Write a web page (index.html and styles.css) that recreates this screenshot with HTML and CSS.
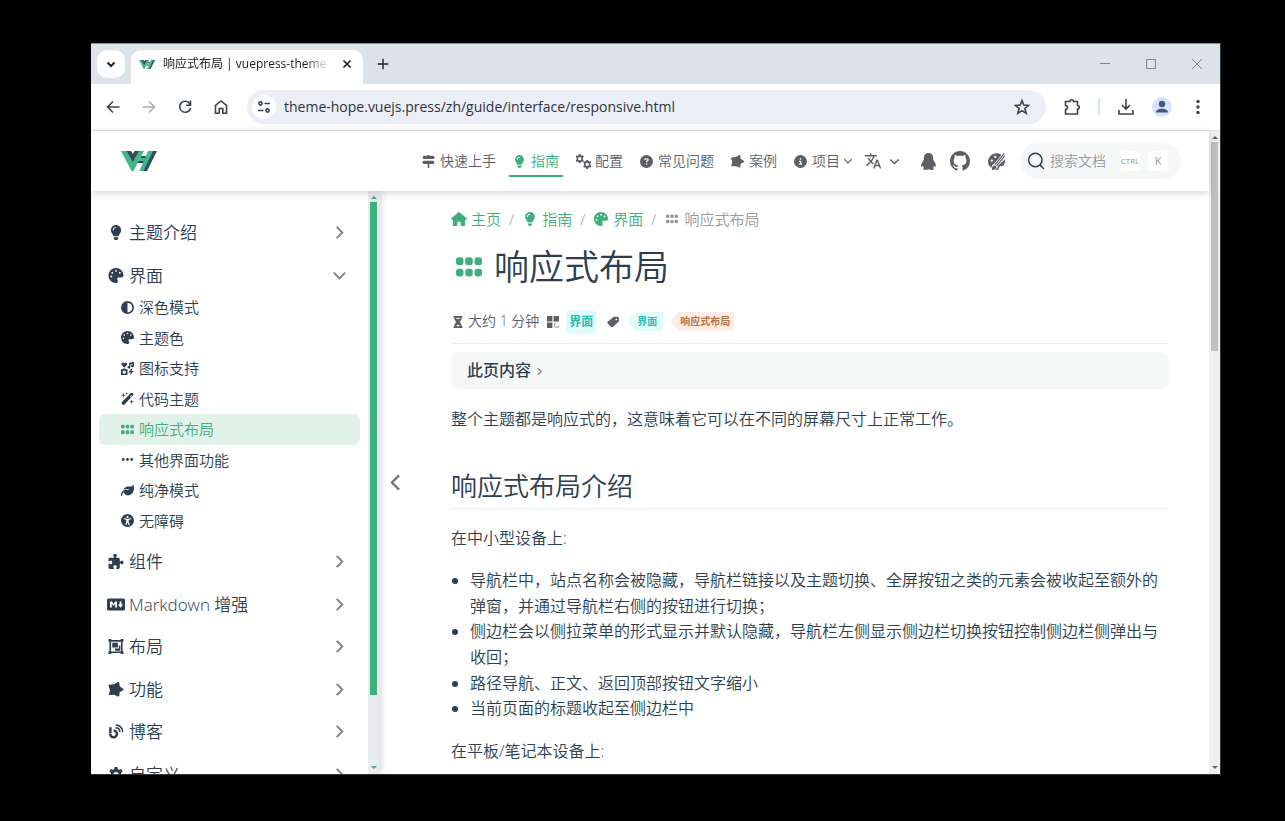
FILE: index.html
```html
<!DOCTYPE html>
<html lang="zh-CN">
<head>
    <meta charset="UTF-8">
    <meta name="viewport" content="width=device-width, initial-scale=1.0">
    <title>响应式布局 | vuepress-theme-hope</title>
    <link rel="stylesheet" href="styles.css">
</head>
<body>
    <!-- icon sprite -->
    <svg class="sprite" aria-hidden="true">
        <symbol id="logo" viewBox="0 0 36 20">
            <path fill="#41b883" d="M0 0h6l5.500 10L16 0h7L12.500 20h-2z"/>
            <path fill="#35495e" d="M5.500 0h4.500l1.800 3 1.800-3H18l-6.300 11z"/>
            <path fill="#35495e" d="M20.500 5H28l-1 2h-7.500zM17.500 10h8l-1 2h-8z"/>
            <path fill="#41b883" d="M19.500 7H28l-2 3h-8.500z"/>
            <path fill="#41b883" d="M27 0h5.500L23.500 20h-5z"/>
            <path fill="#35495e" d="M32 0h4L26 20h-3.500z"/>
        </symbol>
        <symbol id="chevron" viewBox="0 0 16 16"><path fill="none" stroke="currentColor" stroke-width="2" d="M5 2l6 6-6 6"/></symbol>
        <symbol id="bulb" viewBox="-64 0 512 512"><path d="M272 384c9.600-31.900 29.500-59.100 49.200-86.200c5.200-7.100 10.400-14.200 15.400-21.400c19.800-28.500 31.400-63 31.400-100.300C368 78.800 289.200 0 192 0S16 78.800 16 176c0 37.300 11.600 71.900 31.400 100.300c5 7.200 10.200 14.300 15.400 21.400c19.800 27.100 39.700 54.400 49.200 86.200H272zM192 512c44.200 0 80-35.800 80-80V416H112v16c0 44.200 35.800 80 80 80zM112 176c0 8.800-7.200 16-16 16s-16-7.200-16-16c0-61.900 50.100-112 112-112c8.800 0 16 7.200 16 16s-7.200 16-16 16c-44.200 0-80 35.800-80 80z"/></symbol>
        <symbol id="palette" viewBox="0 0 512 512"><path d="M512 256c0 .9 0 1.800 0 2.700c-.4 36.500-33.600 61.300-70.100 61.300H344c-26.500 0-48 21.500-48 48c0 3.400 .4 6.700 1 9.900c2.100 10.200 6.500 20 10.800 29.900c6.100 13.800 12.100 27.500 12.100 42c0 31.800-21.600 60.700-53.400 62c-3.500 .1-7 .2-10.600 .2C114.600 512 0 397.400 0 256S114.600 0 256 0S512 114.600 512 256zM128 288a32 32 0 1 0-64 0 32 32 0 1 0 64 0zm0-96a32 32 0 1 0 0-64 32 32 0 1 0 0 64zM288 96a32 32 0 1 0-64 0 32 32 0 1 0 64 0zm96 96a32 32 0 1 0 0-64 32 32 0 1 0 0 64z"/></symbol>
        <symbol id="half" viewBox="0 0 512 512"><path d="M448 256c0-106-86-192-192-192V448c106 0 192-86 192-192zM0 256a256 256 0 1 1 512 0A256 256 0 1 1 0 256z"/></symbol>
        <symbol id="icons" viewBox="0 0 16 16"><path d="M4 7L1 4C-.5 2 2-.5 4 1.500 6-.5 8.500 2 7 4zM10 1l6-1v5a1.800 1.500 0 1 1-1.500-1.500V2.500l-3 .5v3.500A1.800 1.500 0 1 1 10 5zM2 9l1-1h2l1 1h2v7H0V9zM4 10.500a2 2 0 1 0 0 4 2 2 0 0 0 0-4zM13 8l-4 5h3l-1 3 5-5h-3l1-3z"/></symbol>
        <symbol id="wand" viewBox="0 0 16 16"><path d="M12 1.500a2 2 0 0 1 2.700 0 2 2 0 0 1 0 2.700L4.500 15a2 2 0 0 1-3 0 2 2 0 0 1 0-3zM11 5.500l1 1 1.500-2-.5-.5zM3 1l.7 2.300L6 4l-2.300.7L3 7l-.7-2.300L0 4l2.300-.7zM7 0l.5 1.500L9 2l-1.500.5L7 4l-.5-1.500L5 2l1.500-.5zM13 9l.7 2.300 2.300.7-2.300.7L13 15l-.7-2.300L10 12l2.300-.7z"/></symbol>
        <symbol id="grid" viewBox="0 0 16 16"><rect y="2" width="4.600" height="4.800" rx="1.800"/><rect x="5.700" y="2" width="4.600" height="4.800" rx="1.800"/><rect x="11.400" y="2" width="4.600" height="4.800" rx="1.800"/><rect y="9" width="4.600" height="4.800" rx="1.800"/><rect x="5.700" y="9" width="4.600" height="4.800" rx="1.800"/><rect x="11.400" y="9" width="4.600" height="4.800" rx="1.800"/></symbol>
        <symbol id="dots" viewBox="0 0 16 16"><circle cx="2.800" cy="8" r="1.700"/><circle cx="8" cy="8" r="1.700"/><circle cx="13.200" cy="8" r="1.700"/></symbol>
        <symbol id="leaf" viewBox="0 0 512 512"><path d="M272 96c-78.600 0-145.100 51.500-167.700 122.500c33.600-17 71.500-26.500 111.700-26.500h88c8.800 0 16 7.200 16 16s-7.200 16-16 16H216c-16.600 0-32.700 1.900-48.300 5.400c-25.900 5.900-49.900 16.400-71.400 30.700C38.300 298.800 0 364.900 0 440v16c0 13.300 10.700 24 24 24s24-10.700 24-24V440c0-48.700 20.700-92.500 53.800-123.200C121.600 392.300 190.300 448 272 448l1 0c132.100-.7 239-130.900 239-291.400c0-42.600-7.500-83.100-21.100-119.600c-2.600-6.900-12.700-6.600-16.200-.1C455.900 72.100 418.700 96 376 96z"/></symbol>
        <symbol id="access" viewBox="0 0 16 16"><path fill-rule="evenodd" d="M8 0a8 8 0 1 1 0 16A8 8 0 0 1 8 0zM8 2.500a1.400 1.400 0 1 0 0 2.800 1.400 1.400 0 0 0 0-2.800zM3.500 5v1.200l3 1.100v2.200l-1.200 3.800 1.200.4L8 10.200l1.500 3.500 1.200-.4-1.200-3.800V7.300l3-1.100V5L8.700 6H7.300z"/></symbol>
        <symbol id="puzzle" viewBox="0 0 512 512"><path d="M192 104.800c0-9.200-5.800-17.300-13.200-22.800C167.200 73.300 160 61.300 160 48c0-26.500 28.700-48 64-48s64 21.500 64 48c0 13.300-7.200 25.300-18.800 34c-7.400 5.500-13.200 13.600-13.200 22.800c0 12.800 10.400 23.200 23.200 23.200H336c26.500 0 48 21.500 48 48v56.800c0 12.800 10.400 23.200 23.200 23.200c9.200 0 17.300-5.800 22.800-13.200c8.700-11.600 20.700-18.800 34-18.800c26.500 0 48 28.700 48 64s-21.500 64-48 64c-13.300 0-25.300-7.200-34-18.800c-5.500-7.400-13.600-13.200-22.800-13.200c-12.800 0-23.200 10.400-23.200 23.200V464c0 26.500-21.500 48-48 48H279.200c-12.800 0-23.200-10.400-23.200-23.200c0-9.200 5.800-17.300 13.200-22.800c11.600-8.700 18.800-20.700 18.800-34c0-26.500-28.700-48-64-48s-64 21.500-64 48c0 13.300 7.200 25.300 18.800 34c7.400 5.500 13.200 13.600 13.200 22.800c0 12.800-10.400 23.200-23.200 23.200H48c-26.500 0-48-21.500-48-48V343.200C0 330.400 10.400 320 23.200 320c9.200 0 17.300 5.800 22.800 13.200C54.700 344.800 66.700 352 80 352c26.500 0 48-28.700 48-64s-21.500-64-48-64c-13.300 0-25.300 7.200-34 18.800C40.500 250.200 32.400 256 23.200 256C10.400 256 0 245.600 0 232.800V176c0-26.500 21.500-48 48-48H168.800c12.800 0 23.200-10.400 23.200-23.200z"/></symbol>
        <symbol id="markdown" viewBox="0 0 18 12"><path fill-rule="evenodd" d="M1.500 0h15A1.500 1.500 0 0 1 18 1.500v9a1.500 1.500 0 0 1-1.500 1.500h-15A1.500 1.500 0 0 1 0 10.500v-9A1.500 1.500 0 0 1 1.500 0zM3 3v6h1.800V5.500L6.500 7.500 8.200 5.500V9H10V3H8.200L6.500 5.200 4.800 3zM12.600 3v3h-1.800l2.700 3.200L16.200 6h-1.800V3z"/></symbol>
        <symbol id="layout" viewBox="0 0 16 16"><path fill-rule="evenodd" d="M0 0h3v1h10V0h3v3h-1v10h1v3h-3v-1H3v1H0v-3h1V3H0zM2.800 3v10h.2v.2h10V13h.2V3H13v-.2H3V3zM4 4h6v5H4zM11 7h1.500v5.500H7V10h4z"/></symbol>
        <symbol id="star" viewBox="0 0 16 16"><path stroke="currentColor" stroke-width="2" stroke-linejoin="round" d="M6 3.500L10.500 1l.5 4.200 4 2.800-4 2.300-.5 4.200L6 12.500l-4.500.5 1.200-4.700L1 4z"/></symbol>
        <symbol id="blog" viewBox="0 0 16 16"><path fill="none" stroke="currentColor" stroke-width="2.600" d="M2 3.500V10M5.500 7a3.600 3.600 0 1 1-3.700 3.600"/><path fill="none" stroke="currentColor" stroke-width="1.600" d="M7.500 1c4.500 0 7.500 3 7.500 7.500M7.500 4c3 0 4.500 1.700 4.500 4.500"/></symbol>
        <symbol id="gear" viewBox="0 0 16 16"><path fill-rule="evenodd" d="M6.500 0h3l.5 2.300 1.300.7 2.200-.8 1.500 2.600L13.400 6.500v3l1.600 1.700-1.500 2.600-2.200-.8-1.300.7-.5 2.300h-3L6 13.700 4.700 13l-2.200.8L1 11.200l1.600-1.700v-3L1 4.800l1.500-2.600 2.200.8L6 2.300zM8 5.200a2.800 2.800 0 1 0 0 5.600 2.800 2.800 0 0 0 0-5.600z"/></symbol>
        <symbol id="gears" viewBox="0 0 16 16"><use href="#gear" x="-1" y="0" width="10" height="10"/><use href="#gear" x="7" y="6" width="10" height="10"/></symbol>
        <symbol id="sign" viewBox="0 0 16 16"><path d="M7 0h2v1h5l2 2-2 2H2L1 4V2l1-1h5zM2 7h12l1 1v2l-1 1H9v5H7v-5H2L0 9z"/></symbol>
        <symbol id="question" viewBox="0 0 512 512"><path d="M256 512A256 256 0 1 0 256 0a256 256 0 1 0 0 512zM169.800 165.300c7.900-22.300 29.100-37.300 52.800-37.300h58.300c34.900 0 63.100 28.300 63.100 63.100c0 22.600-12.100 43.500-31.700 54.800L280 264.400c-.2 13-10.900 23.600-24 23.600c-13.300 0-24-10.700-24-24V250.500c0-8.600 4.600-16.500 12.100-20.800l44.300-25.400c4.700-2.700 7.600-7.700 7.600-13.100c0-8.400-6.800-15.100-15.100-15.100H222.600c-3.400 0-6.400 2.100-7.500 5.300l-.4 1.200c-4.400 12.500-18.200 19-30.600 14.600s-19-18.200-14.600-30.600zM224 352a32 32 0 1 1 64 0 32 32 0 1 1-64 0z"/></symbol>
        <symbol id="info" viewBox="0 0 512 512"><path d="M256 512A256 256 0 1 0 256 0a256 256 0 1 0 0 512zM216 336h24V272H216c-13.300 0-24-10.700-24-24s10.700-24 24-24h48c13.300 0 24 10.700 24 24v88h8c13.300 0 24 10.700 24 24s-10.700 24-24 24H216c-13.300 0-24-10.700-24-24s10.700-24 24-24zm40-208a32 32 0 1 1 0 64 32 32 0 1 1 0-64z"/></symbol>
        <symbol id="lang" viewBox="0 0 24 24"><path d="M12.870 15.070l-2.540-2.510.03-.03A17.520 17.520 0 0 0 14.070 6H17V4h-7V2H8v2H1v2h11.170C11.500 7.920 10.440 9.750 9 11.350 8.070 10.320 7.300 9.190 6.690 8h-2c.73 1.630 1.730 3.170 2.980 4.560l-5.090 5.020L4 19l5-5 3.110 3.110zM18.500 10h-2L12 22h2l1.120-3h4.750L21 22h2zm-2.620 7l1.620-4.330L19.120 17z"/></symbol>
        <symbol id="qq" viewBox="0 0 16 18"><path d="M8 0c3.500 0 5 2.500 5 5.500 0 1 0 1.800.5 2.500 1.500 2 2.500 4 2.300 6-.2 1.200-1 .8-1.800-.5-.2.800-.5 1.500-1.200 2.200 1.500.8 1 2.300-1.300 2.300-1.500 0-2.500-.2-3.500-.7-1 .5-2 .7-3.500.7-2.300 0-2.800-1.500-1.300-2.300-.7-.7-1-1.400-1.200-2.200-.8 1.300-1.600 1.700-1.800.5-.2-2 .8-4 2.300-6 .5-.7.500-1.500.5-2.500C3 2.500 4.500 0 8 0z"/></symbol>
        <symbol id="github" viewBox="0 0 16 16"><path d="M8 0C3.580 0 0 3.580 0 8c0 3.540 2.290 6.530 5.470 7.590.4.070.55-.17.55-.38 0-.19-.01-.82-.01-1.490-2.010.37-2.530-.49-2.690-.94-.09-.23-.48-.94-.82-1.130-.28-.15-.68-.52-.01-.53.63-.01 1.080.58 1.230.82.720 1.210 1.870.87 2.330.66.070-.52.280-.87.510-1.070-1.780-.2-3.640-.89-3.640-3.950 0-.87.310-1.590.820-2.150-.08-.2-.36-1.020.080-2.120 0 0 .67-.21 2.200.82.640-.18 1.320-.27 2-.27s1.360.090 2 .27c1.530-1.040 2.200-.82 2.200-.82.440 1.100.160 1.920.080 2.120.510.560.820 1.270.820 2.150 0 3.070-1.870 3.750-3.650 3.950.290.250.540.730.540 1.480 0 1.070-.01 1.930-.01 2.200 0 .210.150.460.550.380A8.010 8.010 0 0 0 16 8c0-4.420-3.580-8-8-8z"/></symbol>
        <symbol id="theme" viewBox="0 0 512 512"><path d="M256 10c70 0 110 20 150 50L190 320c-70 20-80 70-90 130C40 410 0 340 0 256S90 10 256 10zM512 190c0 120-20 200-90 200-60 0-90 10-100 100-30 30-90 20-130 10 60-10 110-50 100-110z"/><path fill="none" stroke="#fff" stroke-width="24" d="M180 350L480 20M290 370L500 110"/><path fill="none" stroke="currentColor" stroke-width="34" d="M210 360L490 10M260 390L510 80"/><path d="M120 510c-10-40 0-120 80-130s80 130-80 130z"/><circle cx="115" cy="230" r="34" fill="#fff"/><circle cx="220" cy="120" r="34" fill="#fff"/></symbol>
        <symbol id="search" viewBox="0 0 20 20"><path fill="none" stroke="currentColor" stroke-width="1.500" stroke-linecap="round" d="M14.400 14.400L17.500 17.500M16 9A6.700 6.700 0 1 1 2.600 9a6.700 6.700 0 0 1 13.400 0z"/></symbol>
        <symbol id="home" viewBox="0 0 576 512"><path d="M575.800 255.500c0 18-15 32.100-32 32.100h-32l.7 160.200V472c0 22.100-17.900 40-40 40H392c-22.100 0-40-17.900-40-40V384c0-17.700-14.300-32-32-32H256c-17.700 0-32 14.300-32 32v88c0 22.100-17.900 40-40 40H104c-22.100 0-40-17.900-40-40V287.600H32c-18 0-32-14-32-32.100c0-9 3-17 10-24L266.400 8c7-7 15-8 22-8s15 2 21 7L564.800 231.500c8 7 12 15 11 24z"/></symbol>
        <symbol id="hourglass" viewBox="0 0 16 16"><path fill-rule="evenodd" d="M2 0h12v2h-1c0 3-1.500 4.500-3 6 1.500 1.500 3 3 3 6h1v2H2v-2h1c0-3 1.500-4.500 3-6-1.500-1.500-3-3-3-6H2zM5.500 2.500c.2 1 .6 1.200 1 1.500h3c.4-.3.800-.5 1-1.500zM6 13.500h4c-.3-1.500-1-2-2-2s-1.700.5-2 2z"/></symbol>
        <symbol id="category" viewBox="0 0 16 16"><path d="M0 0h7.200v7.200H0zM8.800 0H16v7.200H8.800zM0 8.800h7.200V16H0z"/><path fill="none" stroke="currentColor" stroke-width="1.600" stroke-opacity=".5" d="M12.500 9.600a2.800 2.800 0 1 0 2.800 2.800V15h-3"/></symbol>
        <symbol id="tag" viewBox="0 0 16 16"><path fill-rule="evenodd" d="M9 1h5.500L16 2.500V7l-8.500 8H6L.5 9.500V8zM12.500 3.200a1.300 1.300 0 1 0 0 2.600 1.300 1.300 0 0 0 0-2.600z"/></symbol>
    </svg>

    <div class="browser">
        <div class="tab-strip">
            <button class="tab-search" type="button" aria-label="搜索标签页">
                <svg viewBox="0 0 16 16"><path d="M4.500 6.500l3.500 3.500 3.500-3.500"/></svg>
            </button>
            <div class="tab">
                <svg class="favicon"><use href="#logo"/></svg>
                <span class="tab-title">响应式布局 | vuepress-theme-hope</span>
                <button type="button" aria-label="关闭标签页"><svg viewBox="0 0 16 16"><path d="M4 4l8 8M12 4l-8 8"/></svg></button>
            </div>
            <button class="new-tab" type="button" aria-label="新标签页"><svg viewBox="0 0 16 16"><path d="M8 2v12M2 8h12"/></svg></button>
            <div class="window-controls">
                <button type="button" aria-label="最小化"><svg viewBox="0 0 12 12"><path d="M1 5.500h10"/></svg></button>
                <button type="button" aria-label="最大化"><svg viewBox="0 0 12 12"><path d="M1.500 1.500h9v9h-9z"/></svg></button>
                <button type="button" aria-label="关闭"><svg viewBox="0 0 12 12"><path d="M1 1l10 10M11 1L1 11"/></svg></button>
            </div>
        </div>

        <div class="toolbar">
            <button type="button" aria-label="后退"><svg viewBox="0 0 16 16"><path d="M14.500 8H3M8 2.500L2.500 8 8 13.500"/></svg></button>
            <button class="disabled" type="button" aria-label="前进"><svg viewBox="0 0 16 16"><path d="M1.500 8H13M8 2.500L13.500 8 8 13.500"/></svg></button>
            <button type="button" aria-label="重新加载"><svg viewBox="0 0 16 16"><path d="M13 5a5.500 5.500 0 1 0 .6 4M13.500 1.500v4.700H9"/></svg></button>
            <button type="button" aria-label="主页"><svg viewBox="0 0 16 16"><path d="M2.500 14.200V6.500L8 2l5.500 4.500v7.700h-3.700V9.500H6.200v4.700z"/></svg></button>
            <div class="omnibox">
                <button class="site-info" type="button" aria-label="网站信息"><svg viewBox="0 0 16 16"><circle cx="4.500" cy="4.500" r="1.600"/><path d="M8.500 4.500H14M2 11.500h5.500"/><circle cx="11.500" cy="11.500" r="1.600"/></svg></button>
                <input type="text" aria-label="地址" value="theme-hope.vuejs.press/zh/guide/interface/responsive.html">
                <button type="button" aria-label="收藏"><svg viewBox="0 0 16 16"><path d="M8 1.500l1.800 4.600 4.900.3-3.800 3.100 1.300 4.800L8 11.600l-4.200 2.700 1.300-4.800-3.800-3.100 4.900-.3z"/></svg></button>
            </div>
            <button class="extensions" type="button" aria-label="扩展程序"><svg viewBox="0 0 18 18"><path d="M2.500 3.500h4.500a1.800 1.800 0 0 1 3.600 0H14.500v4a1.800 1.800 0 0 1 0 3.600v4.900h-12v-4.500a2 2 0 0 0 0-4z"/></svg></button>
            <span class="separator"></span>
            <button type="button" aria-label="下载"><svg viewBox="0 0 16 16"><path d="M8 0v9.500M4 6l4 4 4-4M1 11v4h14v-4"/></svg></button>
            <button class="profile" type="button" aria-label="个人资料"><svg viewBox="0 0 20 20"><circle cx="10" cy="7" r="3.200"/><path d="M4 15.500c0-5 12-5 12 0z"/></svg></button>
            <button class="menu" type="button" aria-label="菜单"><svg viewBox="0 0 16 16"><circle cx="8" cy="2.500" r="1.700"/><circle cx="8" cy="8" r="1.700"/><circle cx="8" cy="13.500" r="1.700"/></svg></button>
        </div>

        <div class="viewport">
            <div class="page">
                <header class="navbar">
                    <a href="#" class="brand" aria-label="首页"><svg><use href="#logo"/></svg></a>
                    <nav class="nav-links">
                        <a href="#"><svg class="icon"><use href="#sign"/></svg>快速上手</a>
                        <a href="#" class="active"><svg class="icon"><use href="#bulb"/></svg>指南</a>
                        <a href="#"><svg class="icon wide"><use href="#gears"/></svg>配置</a>
                        <a href="#"><svg class="icon"><use href="#question"/></svg>常见问题</a>
                        <a href="#"><svg class="icon"><use href="#star"/></svg>案例</a>
                        <a href="#"><svg class="icon"><use href="#info"/></svg>项目<svg class="caret"><use href="#chevron"/></svg></a>
                    </nav>
                    <div class="nav-tools">
                        <button class="lang" type="button" aria-label="选择语言"><svg><use href="#lang"/></svg><svg class="caret"><use href="#chevron"/></svg></button>
                        <a href="#" class="qq" aria-label="QQ"><svg><use href="#qq"/></svg></a>
                        <a href="#" class="github" aria-label="GitHub"><svg><use href="#github"/></svg></a>
                        <button class="appearance" type="button" aria-label="外观"><svg><use href="#theme"/></svg></button>
                    </div>
                    <button class="search" type="button">
                        <svg><use href="#search"/></svg>
                        <span>搜索文档</span>
                        <kbd class="ctrl">CTRL</kbd><kbd>K</kbd>
                    </button>
                </header>

                <div class="columns">
                    <aside class="sidebar">
                        <div class="sidebar-links">
                            <button class="group" type="button"><svg class="icon"><use href="#bulb"/></svg>主题介绍<svg class="arrow"><use href="#chevron"/></svg></button>
                            <div>
                                <button class="group open" type="button"><svg class="icon"><use href="#palette"/></svg>界面<svg class="arrow"><use href="#chevron"/></svg></button>
                                <ul>
                                    <li><a href="#"><svg class="icon"><use href="#half"/></svg>深色模式</a></li>
                                    <li><a href="#"><svg class="icon"><use href="#palette"/></svg>主题色</a></li>
                                    <li><a href="#"><svg class="icon"><use href="#icons"/></svg>图标支持</a></li>
                                    <li><a href="#"><svg class="icon"><use href="#wand"/></svg>代码主题</a></li>
                                    <li><a href="#" class="active"><svg class="icon"><use href="#grid"/></svg>响应式布局</a></li>
                                    <li><a href="#"><svg class="icon"><use href="#dots"/></svg>其他界面功能</a></li>
                                    <li><a href="#"><svg class="icon"><use href="#leaf"/></svg>纯净模式</a></li>
                                    <li><a href="#"><svg class="icon"><use href="#access"/></svg>无障碍</a></li>
                                </ul>
                            </div>
                            <button class="group" type="button"><svg class="icon"><use href="#puzzle"/></svg>组件<svg class="arrow"><use href="#chevron"/></svg></button>
                            <button class="group" type="button"><svg class="icon"><use href="#markdown"/></svg>Markdown 增强<svg class="arrow"><use href="#chevron"/></svg></button>
                            <button class="group" type="button"><svg class="icon"><use href="#layout"/></svg>布局<svg class="arrow"><use href="#chevron"/></svg></button>
                            <button class="group" type="button"><svg class="icon"><use href="#star"/></svg>功能<svg class="arrow"><use href="#chevron"/></svg></button>
                            <button class="group" type="button"><svg class="icon"><use href="#blog"/></svg>博客<svg class="arrow"><use href="#chevron"/></svg></button>
                            <button class="group" type="button"><svg class="icon"><use href="#gear"/></svg>自定义<svg class="arrow"><use href="#chevron"/></svg></button>
                        </div>
                        <div class="scrollbar green">
                            <span class="up"></span>
                            <span class="thumb"></span>
                            <span class="down"></span>
                        </div>
                    </aside>

                    <button class="toggle-sidebar" type="button" aria-label="切换侧边栏"><svg><use href="#chevron"/></svg></button>

                    <main class="content">
                        <nav class="breadcrumb">
                            <a href="#"><svg class="icon"><use href="#home"/></svg>主页</a>
                            <span>/</span>
                            <a href="#"><svg class="icon"><use href="#bulb"/></svg>指南</a>
                            <span>/</span>
                            <a href="#"><svg class="icon"><use href="#palette"/></svg>界面</a>
                            <span>/</span>
                            <a href="#" class="current"><svg class="icon"><use href="#grid"/></svg>响应式布局</a>
                        </nav>
                        <h1><svg class="icon"><use href="#grid"/></svg>响应式布局</h1>
                        <div class="page-info">
                            <svg class="icon"><use href="#hourglass"/></svg>
                            <span class="reading-time">大约 1 分钟</span>
                            <svg class="icon"><use href="#category"/></svg>
                            <a href="#" class="category">界面</a>
                            <svg class="icon"><use href="#tag"/></svg>
                            <a href="#" class="tag">界面</a>
                            <a href="#" class="tag orange">响应式布局</a>
                        </div>
                        <button class="toc" type="button">此页内容<svg><use href="#chevron"/></svg></button>
                        <p>整个主题都是响应式的，这意味着它可以在不同的屏幕尺寸上正常工作。</p>
                        <h2>响应式布局介绍</h2>
                        <p>在中小型设备上:</p>
                        <ul>
                            <li>导航栏中，站点名称会被隐藏，导航栏链接以及主题切换、全屏按钮之类的元素会被收起至额外的弹窗，并通过导航栏右侧的按钮进行切换；</li>
                            <li>侧边栏会以侧拉菜单的形式显示并默认隐藏，导航栏左侧显示侧边栏切换按钮控制侧边栏侧弹出与收回；</li>
                            <li>路径导航、正文、返回顶部按钮文字缩小</li>
                            <li>当前页面的标题收起至侧边栏中</li>
                        </ul>
                        <p>在平板/笔记本设备上:</p>
                    </main>
                </div>
            </div>
            <div class="scrollbar">
                <span class="up"></span>
                <span class="thumb"></span>
                <span class="down"></span>
            </div>
        </div>
    </div>
</body>
</html>
```

FILE: styles.css
```css
* {
    box-sizing: border-box;
}

body {
    margin: 0;
    height: 100vh;
    padding: 43px 64px 46px 91px;
    background-color: #000;
    color: #2c3e50;
    font-family: "Open Sans", "Noto Sans CJK SC", sans-serif;
    font-size: 16px;
    font-weight: 350;
    line-height: 1.6;
}

a {
    color: inherit;
    text-decoration: none;
}

button {
    display: flex;
    align-items: center;
    justify-content: center;
    flex: none;
    padding: 0;
    border: none;
    background: none;
    color: inherit;
    font: inherit;
    cursor: pointer;
}

svg {
    flex: none;
    fill: currentColor;
}

.sprite {
    display: none;
}

.icon {
    width: 14px;
    height: 14px;
}

.browser {
    display: flex;
    flex-direction: column;
    height: 100%;
    overflow: hidden;
    border-top: 1px solid #8a8d90;
    border-right: 1px solid #333;
    border-bottom: 1px solid #333;
    background-color: #fff;
}

/* tab strip */
.tab-strip {
    display: flex;
    align-items: center;
    height: 40px;
    flex: none;
    padding-left: 6px;
    background-color: #dce3e9;
    color: #202124;
}

.tab-strip svg,
.toolbar svg {
    width: 16px;
    height: 16px;
    fill: none;
    stroke: currentColor;
    stroke-width: 2;
}

.tab-search {
    width: 28px;
    height: 28px;
    border-radius: 10px;
    background-color: #fff;
}

.tab {
    display: flex;
    align-items: center;
    align-self: flex-end;
    width: 232px;
    height: 34px;
    margin: 0 13px 0 6px;
    padding: 0 9px 6px 8px;
    border-radius: 10px 10px 0 0;
    background-color: #fff;
}

.tab .favicon {
    width: 16px;
    height: 9px;
    margin-right: 8px;
    stroke: none;
}

.tab-title {
    flex: 1;
    overflow: hidden;
    font-size: 12px;
    font-weight: 400;
    line-height: 20px;
    white-space: nowrap;
    -webkit-mask-image: linear-gradient(to right, #000 85%, transparent);
    mask-image: linear-gradient(to right, #000 85%, transparent);
}

.tab button {
    margin-left: 10px;
}

.tab button svg {
    width: 14px;
    height: 14px;
}

.tab-strip .new-tab svg {
    width: 14px;
    height: 14px;
    stroke-width: 1.6;
}

.window-controls {
    display: flex;
    margin-left: auto;
    color: #7c8288;
}

.window-controls button {
    width: 46px;
}

.tab-strip .window-controls svg {
    width: 12px;
    height: 12px;
    stroke-width: 1;
}

/* toolbar */
.toolbar {
    display: flex;
    align-items: center;
    height: 47px;
    flex: none;
    padding: 0 4px;
    border-bottom: 1px solid #dfe1e4;
    color: #3c4350;
}

.toolbar button {
    width: 36px;
    height: 34px;
}

.toolbar svg {
    stroke-width: 1.6;
}

.toolbar .disabled {
    color: #a9adb3;
}

.omnibox {
    display: flex;
    align-items: center;
    flex: 1;
    height: 34px;
    margin: 0 8px;
    padding: 0 6px 0 5px;
    border-radius: 17px;
    background-color: #ebeef7;
}

.toolbar .site-info {
    width: 24px;
    height: 24px;
    border-radius: 12px;
    background-color: #fff;
}

.omnibox input {
    flex: 1;
    min-width: 0;
    margin-left: 6px;
    border: none;
    background: none;
    color: #30343a;
    font: inherit;
    font-size: 14px;
    font-weight: 400;
}

.toolbar .extensions svg {
    width: 18px;
    height: 18px;
}

.separator {
    width: 2px;
    height: 16px;
    margin: 0 8px;
    background-color: #d3e3fb;
}

.toolbar .profile svg {
    width: 20px;
    height: 20px;
    border-radius: 10px;
    background-color: #d4e5fb;
    fill: #46557a;
    stroke: none;
}

.toolbar .menu svg {
    fill: currentColor;
    stroke: none;
}

/* page */
.viewport {
    display: flex;
    flex: 1;
    min-height: 0;
}

.page {
    display: flex;
    flex-direction: column;
    flex: 1;
    min-width: 0;
}

.scrollbar {
    display: flex;
    flex-direction: column;
    align-items: center;
    width: 11px;
    flex: none;
    padding: 5px 2px;
    background-color: #f0f0f0;
    color: #5c6470;
}

.scrollbar .up,
.scrollbar .down {
    border: 3px solid transparent;
    border-top: none;
    border-bottom-color: currentColor;
}

.scrollbar .down {
    margin-top: auto;
    border-top: 3px solid currentColor;
    border-bottom: none;
}

.scrollbar .thumb {
    width: 100%;
    height: 33%;
    margin-top: 3px;
    background-color: #c0c0c0;
}

.scrollbar.green {
    background-color: #e9ebef;
    color: #3eaf7c;
}

.scrollbar.green .thumb {
    height: 86%;
    background-color: #3eaf7c;
}

.navbar {
    position: relative;
    z-index: 2;
    display: flex;
    align-items: center;
    height: 60px;
    flex: none;
    padding: 0 28px 0 30px;
    background-color: #fff;
    box-shadow: 0 2px 8px rgba(0, 0, 0, 0.16);
    color: #5c6066;
}

.brand {
    display: flex;
    margin-right: auto;
}

.brand svg {
    width: 36px;
    height: 20px;
}

.nav-links {
    display: flex;
    gap: 9px;
    font-size: 14px;
}

.nav-links a {
    display: flex;
    align-items: center;
    height: 32px;
    padding: 0 4px;
    border-top: 2px solid transparent;
    border-bottom: 2px solid transparent;
}

.nav-links .icon {
    width: 13px;
    height: 13px;
    margin-right: 5px;
}

.nav-links .wide {
    width: 15px;
    height: 15px;
    margin-right: 4px;
}

.nav-links .active {
    border-bottom-color: #3eaf7c;
    color: #3eaf7c;
}

.caret {
    width: 10px;
    height: 10px;
    margin-left: 3px;
    transform: rotate(90deg);
}

.nav-tools {
    display: flex;
    align-items: center;
}

.lang {
    margin: 0 21px 0 7px;
}

.lang svg {
    width: 18px;
    height: 18px;
}

.lang .caret {
    width: 11px;
    height: 11px;
    margin-left: 7px;
}

.qq svg {
    display: block;
    width: 15px;
    height: 17px;
}

.github svg,
.appearance svg {
    display: block;
    width: 20px;
    height: 20px;
    margin-left: 14px;
}

.appearance svg {
    width: 17px;
    height: 17px;
    margin-left: 18px;
}

.search {
    justify-content: flex-start;
    width: 161px;
    height: 36px;
    margin-left: 15px;
    padding: 0 13px 0 6px;
    border-radius: 18px;
    background-color: #f6f8f8;
    color: #969aa0;
    font-size: 14px;
}

.search svg {
    width: 20px;
    height: 20px;
    margin-right: 4px;
    color: #2c3e50;
}

.search span {
    margin-right: auto;
}

.search kbd {
    width: 20px;
    height: 20px;
    margin-left: 8px;
    border-radius: 3px;
    background-color: #fff;
    font-family: "Open Sans", sans-serif;
    font-size: 11px;
    font-weight: 400;
    line-height: 20px;
    text-align: center;
}

.search .ctrl {
    font-size: 8px;
}

.columns {
    display: flex;
    flex: 1;
    min-height: 0;
    overflow: hidden;
}

/* sidebar */
.sidebar {
    display: flex;
    width: 288px;
    flex: none;
    box-shadow: 2px 0 8px rgba(0, 0, 0, 0.16);
}

.sidebar-links {
    display: flex;
    flex-direction: column;
    gap: 9px;
    flex: 1;
    padding: 25px 8px 0;
    overflow: hidden;
    line-height: 1.5;
}

.group {
    justify-content: flex-start;
    width: 100%;
    padding: 4px 13px 4px 8px;
    font-size: 17px;
}

.group .icon {
    width: 18px;
    height: 15px;
    margin-right: 4px;
}

.arrow {
    width: 15px;
    height: 15px;
    margin-left: auto;
    color: #7b8189;
}

.open .arrow {
    transform: rotate(90deg);
}

.sidebar ul {
    margin: 0;
    padding: 0;
    list-style: none;
}

.sidebar li a {
    display: flex;
    align-items: center;
    padding: 4px 22px;
    border-radius: 6px;
    font-size: 15px;
}

.sidebar li .icon {
    width: 13px;
    height: 13px;
    margin-right: 5px;
}

.sidebar li .active {
    background-color: #e2f1ea;
    color: #3eaf7c;
}

.toggle-sidebar {
    width: 32px;
    color: #6f7680;
}

.toggle-sidebar svg {
    width: 19px;
    height: 19px;
    transform: rotate(180deg);
}

/* content */
.content {
    flex: 1;
    min-width: 0;
    padding: 16px 40px 0;
}

.breadcrumb {
    display: flex;
    gap: 8px;
    color: #999;
    font-size: 15px;
}

.breadcrumb a {
    display: flex;
    align-items: center;
    color: #3eaf7c;
}

.breadcrumb .current {
    color: #999;
}

.breadcrumb .icon {
    width: 16px;
    margin-right: 4px;
}

.breadcrumb .current .icon {
    height: 12px;
}

h1 {
    display: flex;
    align-items: center;
    margin: 12px 0 9px;
    font-size: 35px;
    font-weight: 350;
    line-height: 48px;
}

h1 .icon {
    width: 26px;
    height: 26px;
    margin: 0 12px 0 5px;
    color: #3eaf7c;
}

.page-info {
    display: flex;
    align-items: center;
    height: 44px;
    margin-bottom: 8px;
    border-bottom: 1px solid #eaecef;
    color: #5c6066;
    font-size: 14px;
}

.page-info .icon {
    height: 12px;
}

.reading-time {
    margin: 0 7px 0 3px;
}

.category {
    margin: 0 10px 0 6px;
    padding: 0 3px;
    border-radius: 3px;
    background-color: #e0fbfb;
    color: #2cbcae;
    font-size: 12px;
    font-weight: 700;
    line-height: 24px;
}

.tag {
    margin-left: 7px;
    padding: 0 6px 0 10px;
    background-color: #e0fbfb;
    color: #2cbcae;
    font-size: 10px;
    font-weight: 700;
    line-height: 19px;
    clip-path: polygon(8px 0, 100% 0, 100% 100%, 8px 100%, 0 50%);
}

.tag.orange {
    padding-right: 4px;
    background-color: #feebe4;
    color: #b5744a;
}

.toc {
    justify-content: flex-start;
    width: 100%;
    height: 37px;
    margin-bottom: 18px;
    padding: 0 16px;
    border-radius: 8px;
    background-color: #f6f8f8;
    font-weight: 500;
}

.toc svg {
    width: 9px;
    height: 9px;
    margin: 2px 0 0 4px;
    color: #6f7680;
}

.content p {
    margin: 17px 0;
}

h2 {
    margin: 34px 0 17px;
    padding-bottom: 3px;
    border-bottom: 1px solid #eaecef;
    font-size: 26px;
    font-weight: 350;
    line-height: 38px;
}

.content ul {
    margin: 17px 0;
    padding-left: 19px;
}
```
